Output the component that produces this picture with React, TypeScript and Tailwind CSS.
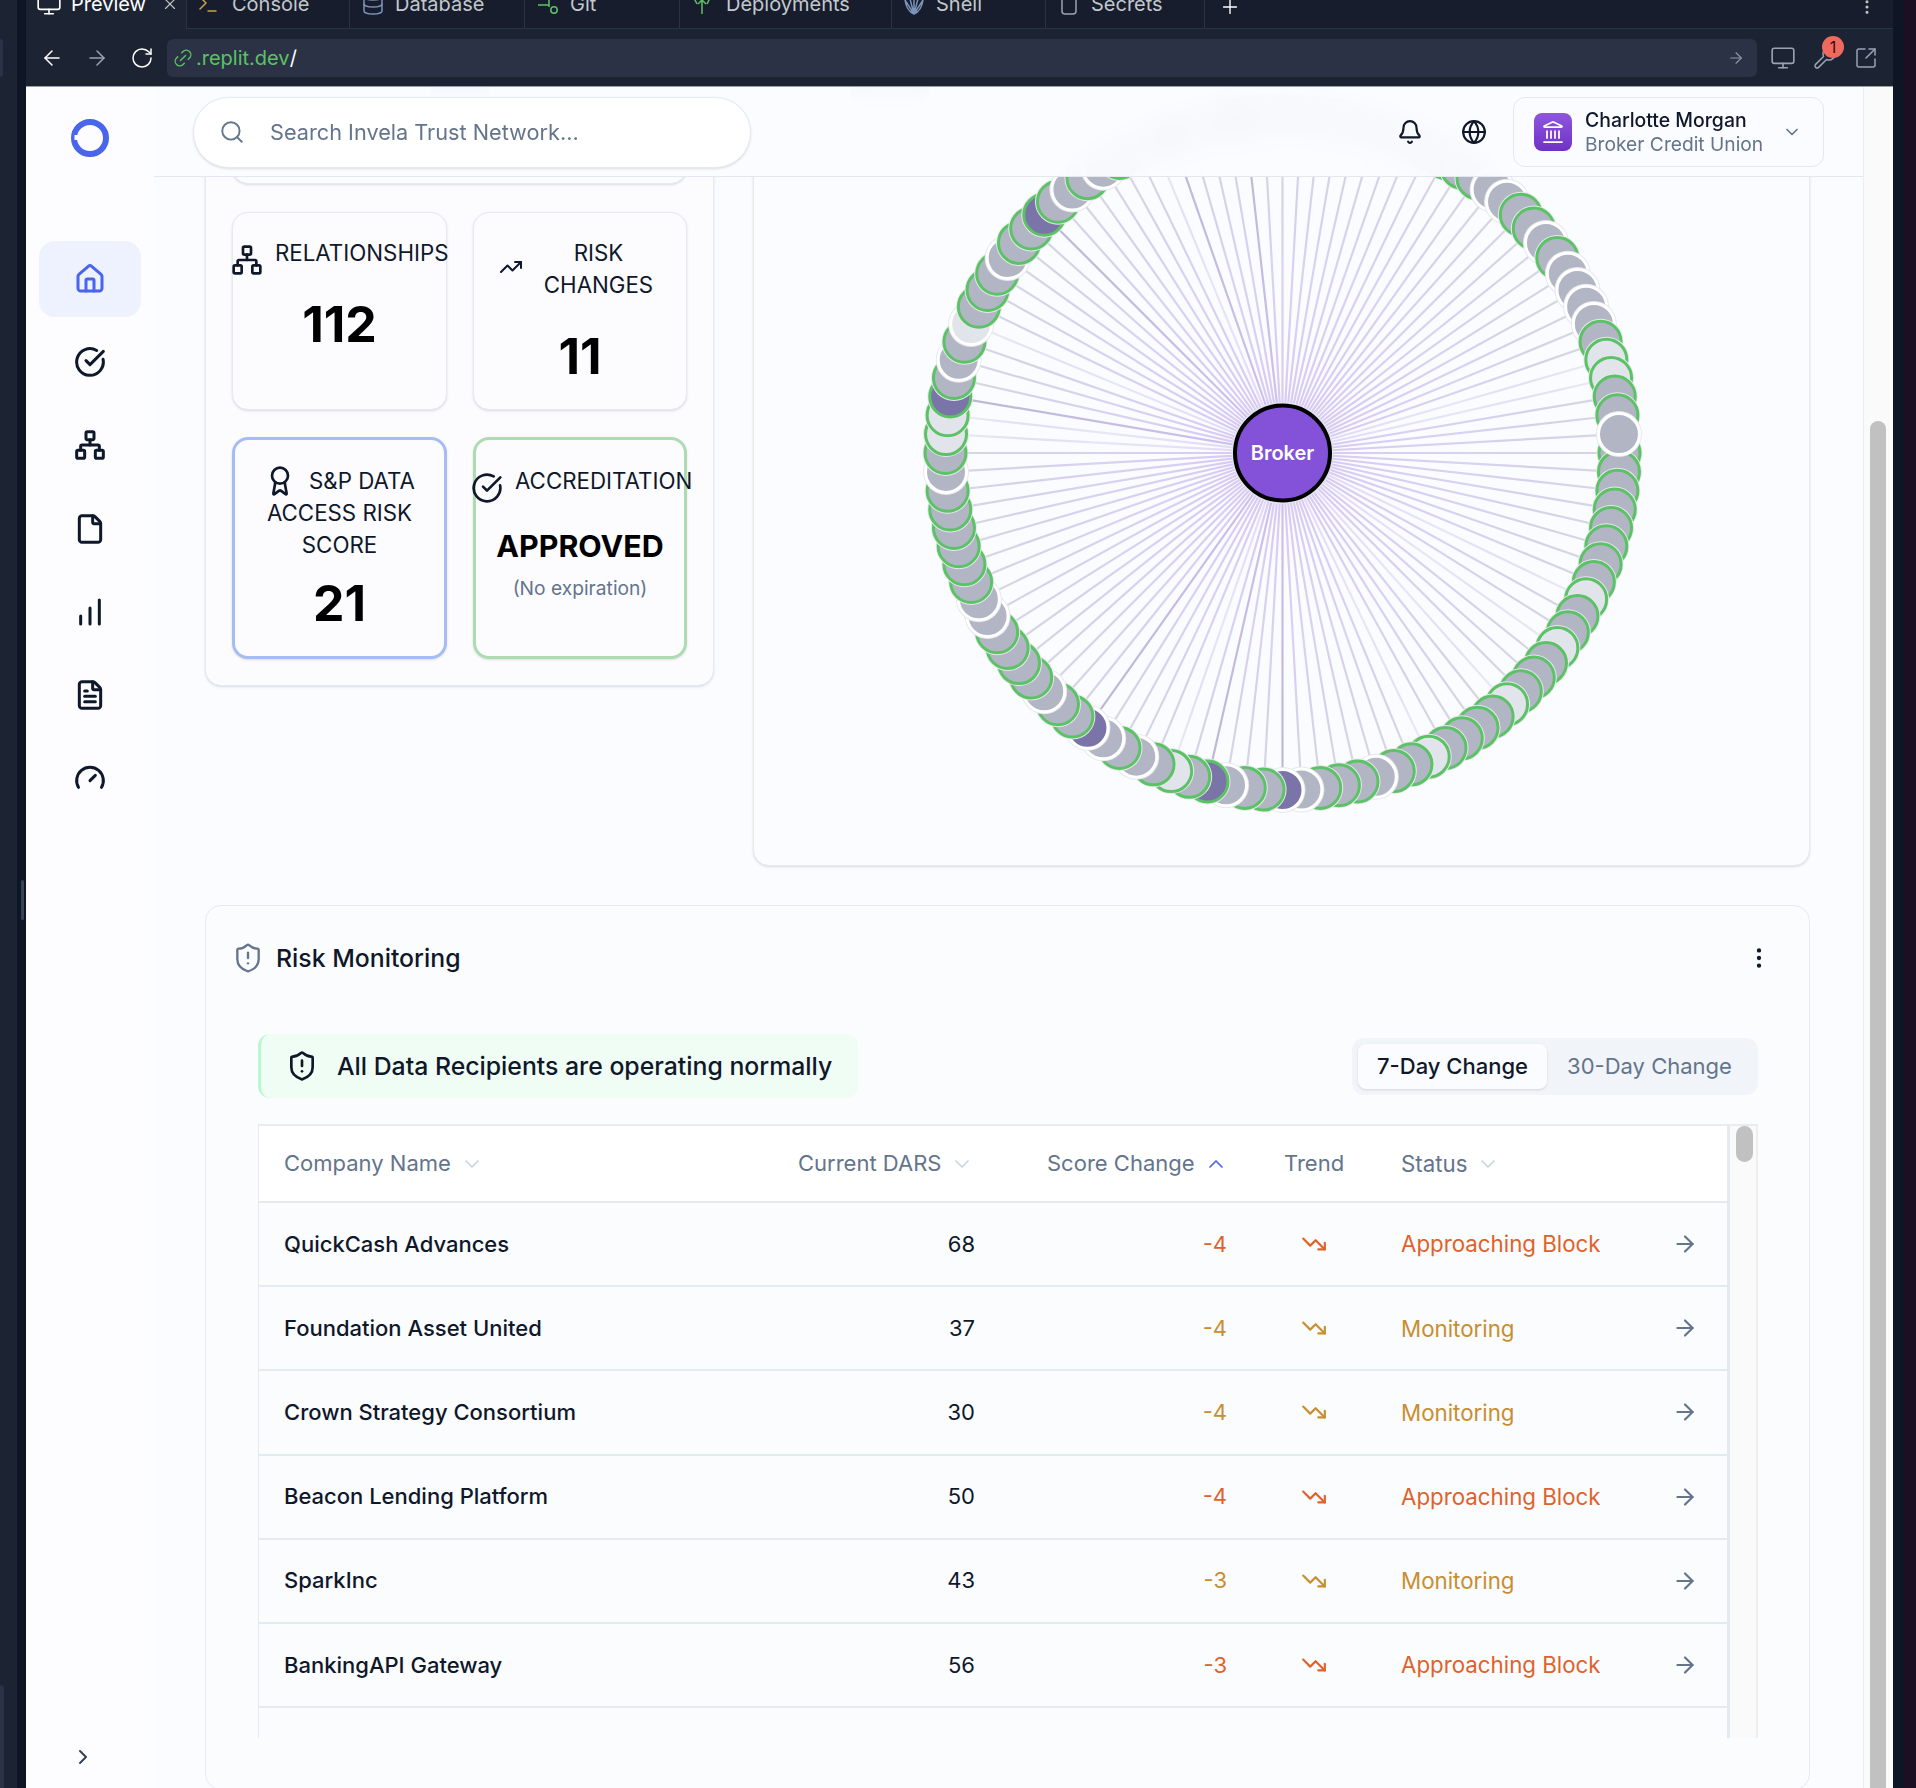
import {
  ArrowLeft,
  ArrowRight,
  Award,
  Bell,
  ChartNoAxesColumnIncreasing,
  ChevronDown,
  ChevronRight,
  ChevronUp,
  CircleCheckBig,
  Database,
  File,
  FileText,
  Gauge,
  Globe,
  Home,
  Landmark,
  Link2,
  Monitor,
  MoreVertical,
  Network,
  Plus,
  RotateCw,
  Search,
  ShieldAlert,
  SquareArrowOutUpRight,
  Terminal,
  TrendingDown,
  TrendingUp,
  Wrench,
  X,
} from 'lucide-react';

const CX = 528.5;
const CY = 405;
const RING = 337;

// a gray/green, b gray/white, c light/green, d light/white, e purple/green, f purple/white
const NODES =
  'aaaaaaaaca' +
  'acaaacaaaa' +
  'caabaaabfa' +
  'abeacababf' +
  'aabaaaabba' +
  'aaaaabacce' +
  'abadaaabaa' +
  'eababaacea' +
  'aaeaaaaaaa' +
  'aaaaaabbaa' +
  'babbbbacca' +
  'ab';

const FILL: Record<string, string> = {
  a: '#b2b6c4',
  b: '#b2b6c4',
  c: '#e1e4ea',
  d: '#e1e4ea',
  e: '#7b74a8',
  f: '#7b74a8',
};

function lineGradient(code: string) {
  if (code === 'c' || code === 'd') return 'url(#lineLight)';
  if (code === 'e' || code === 'f') return 'url(#lineDark)';
  return 'url(#lineGray)';
}

function NetworkGraph() {
  const nodes = NODES.split('').map((code, i) => {
    const angle = (i * 2 * Math.PI) / NODES.length;
    return { code, x: CX + RING * Math.cos(angle), y: CY + RING * Math.sin(angle) };
  });

  return (
    <svg width="1055" height="817" className="block">
      <defs>
        <radialGradient id="lineGray" gradientUnits="userSpaceOnUse" cx={CX} cy={CY} r={RING}>
          <stop offset="0" stopColor="#8352d8" stopOpacity="0.3" />
          <stop offset="0.55" stopColor="#8a6fd0" stopOpacity="0.3" />
          <stop offset="1" stopColor="#b2b6c4" stopOpacity="0.5" />
        </radialGradient>
        <radialGradient id="lineLight" gradientUnits="userSpaceOnUse" cx={CX} cy={CY} r={RING}>
          <stop offset="0" stopColor="#8352d8" stopOpacity="0.22" />
          <stop offset="0.55" stopColor="#8a6fd0" stopOpacity="0.16" />
          <stop offset="1" stopColor="#e1e4ea" stopOpacity="0.5" />
        </radialGradient>
        <radialGradient id="lineDark" gradientUnits="userSpaceOnUse" cx={CX} cy={CY} r={RING}>
          <stop offset="0" stopColor="#8352d8" stopOpacity="0.34" />
          <stop offset="1" stopColor="#7b74a8" stopOpacity="0.5" />
        </radialGradient>
      </defs>
      <rect x="96" y="38" width="80" height="12" rx="4" fill="#475569" fillOpacity="0.5" />
      {nodes.map((n, i) => (
        <line key={i} x1={CX} y1={CY} x2={n.x} y2={n.y} stroke={lineGradient(n.code)} strokeWidth="2.2" />
      ))}
      {nodes.map((n, i) => {
        const green = n.code === 'a' || n.code === 'c' || n.code === 'e';
        return (
          <g key={i}>
            <circle cx={n.x} cy={n.y} r="23" fill="#e7e8ed" />
            <circle
              cx={n.x}
              cy={n.y}
              r="20.5"
              fill={FILL[n.code]}
              stroke={green ? '#5cc266' : '#ffffff'}
              strokeWidth="3"
            />
          </g>
        );
      })}
      <circle cx={CX} cy={CY} r="51" fill="#e3e3ea" />
      <circle cx={CX} cy={CY} r="47.5" fill="#8352d8" stroke="#000000" strokeWidth="4" />
      <text x={CX} y={CY + 7} textAnchor="middle" fill="#ffffff" fontSize="20" fontWeight="600">
        Broker
      </text>
    </svg>
  );
}

function Logo() {
  return (
    <svg width="38" height="38" viewBox="0 0 38 38" fill="none">
      <circle cx="19" cy="19" r="16" stroke="#4965ec" strokeWidth="6" />
      <rect x="3.500" y="16" width="8" height="5" fill="#fdfdff" />
    </svg>
  );
}

function DeployIcon() {
  return (
    <svg width="24" height="24" viewBox="0 0 24 24" fill="none" stroke="#5cc266" strokeWidth="1.5">
      <path d="M12 22V8M8 12l4-4 4 4M3 4l4 8M21 4l-4 8M3 4c5-3 13-3 18 0" />
    </svg>
  );
}

function GitIcon() {
  return (
    <svg width="24" height="24" viewBox="0 0 24 24" fill="none" stroke="#5cc266" strokeWidth="1.5">
      <path d="M-2 13h13M11 4v11" />
      <circle cx="16" cy="18" r="3.2" />
    </svg>
  );
}

function ShellFan() {
  return (
    <svg width="24" height="24" viewBox="0 0 24 24" fill="none" stroke="#7b93b8" strokeWidth="1.5">
      <path d="M12 22L3 8M12 22L7.5 5M12 22V4M12 22l4.500-17M12 22l9-14M3 8c1 7 4 12 9 14 5-2 8-7 9-14" />
    </svg>
  );
}

const TABS = [
  { label: 'Console', w: 'w-[163px]', pad: 'pl-[9px]', gap: 'gap-[12px]', icon: <Terminal size={24} color="#c9a24a" strokeWidth={1.5} /> },
  { label: 'Database', w: 'w-[175px]', pad: 'pl-[11px]', gap: 'gap-[10px]', icon: <Database size={24} color="#7b93b8" strokeWidth={1.5} /> },
  { label: 'Git', w: 'w-[155px]', pad: 'pl-[13px]', gap: 'gap-[8px]', icon: <GitIcon /> },
  { label: 'Deployments', w: 'w-[212px]', pad: 'pl-[10px]', gap: 'gap-[12px]', icon: <DeployIcon /> },
  { label: 'Shell', w: 'w-[154px]', pad: 'pl-[10px]', gap: 'gap-[10px]', icon: <ShellFan /> },
  {
    label: 'Secrets',
    w: 'w-[159px]',
    pad: 'pl-[11px]',
    gap: 'gap-[10px]',
    icon: (
      <svg width="24" height="24" viewBox="0 0 24 24" fill="none" stroke="#9aa3b5" strokeWidth="1.5">
        <rect x="5" y="6" width="14" height="16" rx="3" />
      </svg>
    ),
  },
];

function TopBar() {
  return (
    <div className="shrink-0 text-[20px] text-[#c2c8cc]">
      <div className="flex h-[29px] overflow-hidden bg-[#171d2d]">
        <div className="flex h-[29px] w-[161px] shrink-0 border-r border-[#2b3245] bg-[#1c2333] pl-[10px] pr-[7px]">
          <div className="flex h-[8px] w-full items-center text-white">
            <Monitor size={26} strokeWidth={1.5} />
            <span className="ml-[9px]">Preview</span>
            <X size={18} strokeWidth={1.5} className="ml-auto text-[#c2c8cc]" />
          </div>
        </div>
        {TABS.map((tab) => (
          <div key={tab.label} className={`flex h-[29px] shrink-0 border-r border-b border-[#2b3245] ${tab.w} ${tab.pad}`}>
            <div className={`flex h-[8px] items-center ${tab.gap}`}>
              {tab.icon}
              <span>{tab.label}</span>
            </div>
          </div>
        ))}
        <div className="flex h-[29px] flex-1 border-b border-[#2b3245] pl-[14px] pr-[17px]">
          <div className="flex h-[14px] w-full items-center justify-between">
            <Plus size={22} strokeWidth={1.5} className="text-white" />
            <MoreVertical size={18} strokeWidth={2} />
          </div>
        </div>
      </div>
      <div className="flex h-[58px] items-center border-b border-[#9aa0ac] bg-[#1c2333]">
        <ArrowLeft size={24} strokeWidth={1.5} className="ml-[14px] text-white" />
        <ArrowRight size={24} strokeWidth={1.5} className="ml-[21px] text-[#9aa3b5]" />
        <RotateCw size={24} strokeWidth={1.5} className="ml-[21px] text-white" />
        <div className="ml-[13px] flex h-[38px] w-[1590px] items-center rounded-[6px] bg-[#2b3245] pl-[5px] pr-[12px]">
          <Link2 size={22} strokeWidth={1.5} className="-rotate-45 text-[#5cc266]" />
          <span className="ml-[2px] mt-[1px] text-[#5cc266]">.replit.dev</span>
          <span className="mt-[1px] text-white">/</span>
          <ArrowRight size={18} strokeWidth={1.5} className="ml-auto text-[#8e96a8]" />
        </div>
        <Monitor size={26} strokeWidth={1.5} className="ml-[13px] text-[#9aa3b5]" />
        <div className="relative ml-[17px]">
          <Wrench size={24} strokeWidth={1.5} className="text-[#9aa3b5]" />
          <span className="absolute -right-[7px] -top-[10px] flex h-[22px] w-[22px] items-center justify-center rounded-full bg-[#ef6a5e] text-[16px] text-[#3a0a08]">
            1
          </span>
        </div>
        <SquareArrowOutUpRight size={24} strokeWidth={1.5} className="ml-[17px] text-[#9aa3b5]" />
      </div>
    </div>
  );
}

const NAV = [
  { Icon: Home, active: true },
  { Icon: CircleCheckBig },
  { Icon: Network },
  { Icon: File },
  { Icon: ChartNoAxesColumnIncreasing },
  { Icon: FileText },
  { Icon: Gauge },
];

function Sidebar() {
  return (
    <aside className="flex w-[128px] shrink-0 flex-col bg-[#fdfdff] pt-[32px] pb-[19px]">
      <div className="ml-[45px]">
        <Logo />
      </div>
      <nav className="mt-[84px] flex flex-col gap-[7.2px] pl-[13px]">
        {NAV.map(({ Icon, active }, i) => (
          <div
            key={i}
            className={`flex h-[76px] w-[102px] items-center justify-center rounded-2xl ${active ? 'bg-[#eef1fe] text-[#4965ec]' : 'text-[#0f172a]'}`}
          >
            <Icon size={32} strokeWidth={2.25} />
          </div>
        ))}
      </nav>
      <ChevronRight size={24} className="ml-[45px] mt-auto text-[#374151]" />
    </aside>
  );
}

function Header() {
  return (
    <header className="absolute inset-x-0 top-0 z-10 flex h-[90px] items-center border-b border-[#e5e7ef] bg-[#fbfcff]/95 pl-[39px] pr-[39px] pt-[1px] backdrop-blur-md">
      <div className="flex h-[71px] w-[558px] items-center rounded-full border border-[#e5e9f0] bg-white pl-[25px] shadow-sm">
        <Search size={26} className="text-[#64748b]" strokeWidth={1.75} />
        <span className="ml-[25px] text-[21.7px] text-[#64748b]">Search Invela Trust Network...</span>
      </div>
      <Bell size={26} className="ml-auto text-[#0f172a]" />
      <Globe size={26} className="ml-[38px] text-[#0f172a]" />
      <div className="ml-[26px] flex h-[70px] w-[311px] items-center rounded-xl border border-[#e5e7ef] pl-[20px] pr-[21px]">
        <div className="flex h-[38px] w-[38px] items-center justify-center rounded-[8px] bg-gradient-to-b from-[#8f56dc] to-[#7030c8] text-white">
          <Landmark size={24} strokeWidth={1.75} />
        </div>
        <div className="ml-[13px] leading-[24px]">
          <div className="text-[19.4px] font-medium text-[#0f172a]">Charlotte Morgan</div>
          <div className="text-[19.2px] text-[#64748b]">Broker Credit Union</div>
        </div>
        <ChevronDown size={20} className="ml-auto text-[#64748b]" />
      </div>
    </header>
  );
}

function StatCards() {
  return (
    <div className="grid grid-cols-[215px_214px] gap-x-[26px] gap-y-[27px]">
      <div className="h-[198px] rounded-2xl border border-[#e8eaf0] bg-[#fcfcff] pt-[24px] shadow-sm">
        <div className="-ml-[2px] flex h-[32px] items-start text-[22.3px] leading-[32px] text-[#0f172a]">
          <Network size={32} className="mt-[7px] shrink-0" />
          <span className="ml-[12px] whitespace-nowrap">RELATIONSHIPS</span>
        </div>
        <div className="mt-[27px] text-center text-[50px] font-bold leading-[56px] text-black">112</div>
      </div>
      <div className="h-[198px] rounded-2xl border border-[#e8eaf0] bg-[#fcfcff] pt-[24px] shadow-sm">
        <div className="flex items-center justify-center gap-[21px] pr-[8px] text-center text-[22.3px] leading-[32px] text-[#0f172a]">
          <TrendingUp size={24} className="mb-[4px] shrink-0" />
          <span>
            RISK
            <br />
            CHANGES
          </span>
        </div>
        <div className="mt-[27px] text-center text-[50px] font-bold leading-[56px] text-black">11</div>
      </div>
      <div className="h-[222px] rounded-2xl border-[3px] border-[#a5bcf5] bg-[#fcfcff] pt-[25px] text-center text-[22.3px] leading-[32px] text-[#0f172a] shadow-sm">
        <div className="flex items-center justify-center gap-[13px]">
          <Award size={32} className="shrink-0" />
          <span>S&amp;P DATA</span>
        </div>
        <div>ACCESS RISK</div>
        <div>SCORE</div>
        <div className="mt-[14px] text-[50px] font-bold leading-[56px] text-black">21</div>
      </div>
      <div className="h-[222px] rounded-2xl border-[3px] border-[#aedbb2] bg-[#fcfcff] pt-[25px] shadow-sm">
        <div className="-ml-[5px] flex h-[32px] items-start text-[22.3px] leading-[32px] text-[#0f172a]">
          <CircleCheckBig size={32} className="mt-[7px] shrink-0" />
          <span className="ml-[12px] whitespace-nowrap">ACCREDITATION</span>
        </div>
        <div className="mt-[29px] text-center text-[30.4px] font-bold leading-[40px] text-black">APPROVED</div>
        <div className="mt-[8px] text-center text-[19.2px] leading-[28px] text-[#64748b]">(No expiration)</div>
      </div>
    </div>
  );
}

const ROWS = [
  { name: 'QuickCash Advances', score: 68, change: -4, status: 'Approaching Block' },
  { name: 'Foundation Asset United', score: 37, change: -4, status: 'Monitoring' },
  { name: 'Crown Strategy Consortium', score: 30, change: -4, status: 'Monitoring' },
  { name: 'Beacon Lending Platform', score: 50, change: -4, status: 'Approaching Block' },
  { name: 'SparkInc', score: 43, change: -3, status: 'Monitoring' },
  { name: 'BankingAPI Gateway', score: 56, change: -3, status: 'Approaching Block' },
];

function RiskTable() {
  return (
    <div className="flex h-[614px] overflow-hidden border-t-2 border-[#e8ecf2]">
      <div className="w-[1472px] border-l border-r-[3px] border-[#e5e9f0]">
        <div className="grid h-[77px] grid-cols-[514px_249px_237px_117px_1fr] items-center border-b-2 border-[#e5e9f0] bg-white pl-[25px] text-[22px] text-[#64748b]">
          <div className="flex items-center gap-[9px]">
            Company Name <ChevronDown size={24} strokeWidth={1.75} className="text-[#cbd5e1]" />
          </div>
          <div className="flex items-center gap-[9px]">
            Current DARS <ChevronDown size={24} strokeWidth={1.75} className="text-[#cbd5e1]" />
          </div>
          <div className="flex items-center gap-[9px]">
            Score Change <ChevronUp size={24} strokeWidth={1.75} className="text-[#4965ec]" />
          </div>
          <div>Trend</div>
          <div className="flex items-center gap-[9px] text-[22.3px]">
            Status <ChevronDown size={24} strokeWidth={1.75} className="text-[#cbd5e1]" />
          </div>
        </div>
        {ROWS.map((row) => {
          const tone = row.status === 'Monitoring' ? 'text-[#c98e2f]' : 'text-[#e0622a]';
          return (
            <div
              key={row.name}
              className="grid h-[84.2px] grid-cols-[514px_249px_237px_117px_1fr] items-center border-b-2 border-[#e5e9f0] pl-[25px] text-[22px]"
            >
              <div className="font-medium text-[#0f172a]">{row.name}</div>
              <div className="pr-[72px] text-right text-[#0f172a]">{row.score}</div>
              <div className={`pr-[57px] text-right ${tone}`}>{row.change}</div>
              <div className={`flex w-[60px] justify-center ${tone}`}>
                <TrendingDown size={26} />
              </div>
              <div className={`flex items-center justify-between pr-[29px] text-[22.3px] ${tone}`}>
                {row.status}
                <ArrowRight size={26} strokeWidth={2} className="text-[#64748b]" />
              </div>
            </div>
          );
        })}
      </div>
      <div className="w-[28px] border-r-2 border-[#eeeeee] bg-[#fafafa] pl-[6px]">
        <div className="h-[36px] w-[17px] rounded-full bg-[#c1c1c1]" />
      </div>
    </div>
  );
}

function RiskMonitoring() {
  return (
    <section className="mt-[39px] h-[885px] rounded-2xl border border-[#e8eaf0] bg-[#fbfcfe] pl-[52px] pr-[51px]">
      <div className="-ml-[26px] -mr-[14px] flex h-[104px] items-center">
        <ShieldAlert size={32} strokeWidth={1.75} className="text-[#64748b]" />
        <h2 className="ml-[12px] mt-[2px] text-[24.8px] font-medium text-[#0f172a]">Risk Monitoring</h2>
        <MoreVertical size={26} className="ml-auto text-[#0f172a]" />
      </div>
      <div className="mt-[24px] flex items-start justify-between">
        <div className="flex h-[64px] w-[600px] items-center rounded-xl border-l-[3px] border-[#bbf7d0] bg-[#f0fdf4] pl-[25px]">
          <ShieldAlert size={32} className="shrink-0 text-[#0f172a]" />
          <span className="ml-[19px] mt-[2px] whitespace-nowrap text-[24.8px] font-medium text-[#0f172a]">All Data Recipients are operating normally</span>
        </div>
        <div className="mt-[4px] flex h-[57px] w-[406px] items-center rounded-xl bg-[#f1f5f9] pl-[6px] text-[22px]">
          <div className="flex h-[45px] w-[189px] items-center justify-center rounded-lg bg-[#fbfcff] font-medium text-[#0f172a] shadow-sm">7-Day Change</div>
          <div className="flex flex-1 items-center justify-center pr-[6px] text-[#64748b]">30-Day Change</div>
        </div>
      </div>
      <div className="mt-[26px]">
        <RiskTable />
      </div>
    </section>
  );
}

export default function App() {
  return (
    <div className="flex h-[1788px] w-full overflow-hidden bg-[#1c2333] font-['Inter',sans-serif]">
      <div className="flex w-[17px] shrink-0 flex-col bg-[#1c2333] pt-[39px]">
        <div className="h-[38px] w-[3px] rounded-r-md bg-[#2b3245]" />
        <div className="mt-auto h-[103px] w-[4px] rounded-tr-md bg-[#2b3245]" />
      </div>
      <div className="w-[9px] shrink-0 bg-[#0e1525] pl-[4px] pt-[880px]">
        <div className="h-[40px] w-[3px] rounded-sm bg-[#3a4258]" />
      </div>
      <div className="flex min-w-0 flex-1 flex-col">
        <TopBar />
        <div className="flex min-h-0 flex-1">
          <Sidebar />
          <main className="relative min-w-0 flex-1 overflow-hidden bg-[#fbfcff]">
            <Header />
            <div className="-mt-[40px] pl-[51px] pr-[53px]">
              <div className="grid grid-cols-[509px_1057px] gap-x-[39px]">
                <div className="self-start rounded-2xl border border-[#e8eaf0] bg-[#fcfcff] px-[26px] pb-[26px] shadow-sm">
                  <div className="mb-[28px] h-[136px] rounded-2xl border border-[#e8eaf0] bg-[#fcfcff] pt-[36px] shadow-sm">
                    <div className="mx-auto h-[10px] w-[60px] rounded-sm bg-[#4965ec]/60" />
                  </div>
                  <StatCards />
                </div>
                <div className="h-[819px] rounded-2xl border border-[#e8eaf0] bg-[#fbfcff] shadow-sm">
                  <NetworkGraph />
                </div>
              </div>
              <RiskMonitoring />
            </div>
          </main>
          <div className="w-[30px] shrink-0 border-l border-[#eeeeee] bg-[#fafafa] pl-[6px] pt-[334px]">
            <div className="h-full w-[16px] rounded-t-full bg-[#c1c1c1]" />
          </div>
        </div>
      </div>
      <div className="w-[11px] shrink-0 bg-[#0e1525]" />
      <div className="w-[12px] shrink-0 bg-[#1c0f24]" />
    </div>
  );
}
